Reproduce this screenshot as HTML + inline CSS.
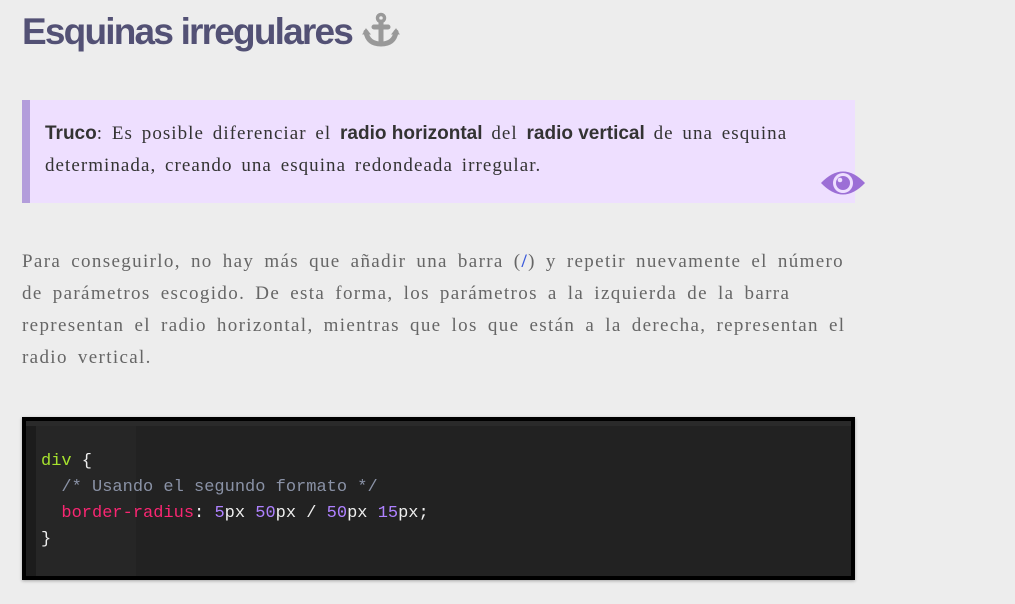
<!DOCTYPE html>
<html><head><meta charset="utf-8"><style>
body{margin:0;background:#ededed;width:1015px;height:604px;overflow:hidden;position:relative;font-family:"Liberation Serif",serif;}
h2{position:absolute;left:22px;top:8px;margin:0;font:bold 37px/48px "Liberation Sans",sans-serif;color:#535175;letter-spacing:-1.8px;}
.tip{position:absolute;left:22px;top:100px;width:825px;height:103px;background:#eedfff;border-left:8px solid #b39ddb;}
.tip p,.para{margin:0;font-size:19px;line-height:32px;letter-spacing:1.2px;word-spacing:3px;}
.tip p{position:absolute;left:15px;top:18px;color:#333;white-space:nowrap;letter-spacing:1.05px;}
b{font-family:"Liberation Sans",sans-serif;letter-spacing:0;word-spacing:0;color:#333;font-size:19px;}
.para{position:absolute;left:22px;top:246px;color:#666;white-space:nowrap;letter-spacing:1.35px;word-spacing:4px;}
.code{position:absolute;left:22px;top:417px;width:825px;height:155px;background:#222;border:4px solid #000;box-shadow:0 1px 3px rgba(0,0,0,.3);}
.code .top{position:absolute;left:0;top:0;right:0;height:5px;background:#2a2a2a;}
.code .l1{position:absolute;left:0;top:5px;bottom:0;width:10px;background:#1c1c1c;}
.code .l2{position:absolute;left:10px;top:5px;bottom:0;width:100px;background:#262626;}
pre{position:absolute;left:15px;top:28px;margin:0;font:17px/26px "Liberation Mono",monospace;color:#eee;}
.g{color:#a6e22e}.c{color:#8a92a6}.r{color:#f92672}.n{color:#ae81ff}
</style></head><body>
<h2>Esquinas irregulares</h2>
<svg style="position:absolute;left:362px;top:12px" width="38" height="36" viewBox="0 0 38 36" fill="none" stroke="#999" stroke-width="5"><circle cx="19" cy="6" r="3.5" stroke-width="3.5"/><path d="M19 10V32M12 15H26M4 20Q6 32 19 32Q32 32 34 20" stroke-linecap="round"/><path d="M1 22L4 17L8 22Z M30 22L34 17L37 22Z" fill="#999" stroke-width="1"/></svg>
<div class="tip"><p><b>Truco</b>: Es posible diferenciar el <b>radio horizontal</b> del <b>radio vertical</b> de una esquina<br>determinada, creando una esquina redondeada irregular.</p>
<svg style="position:absolute;left:789px;top:66px" width="48" height="34" viewBox="0 0 48 34"><path d="M2 17 Q24 -6 46 17 Q24 40 2 17Z" fill="#9c6fd6"/><circle cx="24" cy="17" r="10" fill="#eedfff"/><circle cx="24" cy="17" r="7" fill="#9c6fd6"/><circle cx="21" cy="14" r="2.3" fill="#eedfff"/></svg></div>
<p class="para">Para conseguirlo, no hay más que añadir una barra (<span style="color:#3b5bdb;font-weight:bold">/</span>) y repetir nuevamente el número<br>de parámetros escogido. De esta forma, los parámetros a la izquierda de la barra<br>representan el radio horizontal, mientras que los que están a la derecha, representan el<br>radio vertical.</p>
<div class="code"><div class="top"></div><div class="l1"></div><div class="l2"></div>
<pre><span class="g">div</span> {
  <span class="c">/* Usando el segundo formato */</span>
  <span class="r">border-radius</span>: <span class="n">5</span>px <span class="n">50</span>px / <span class="n">50</span>px <span class="n">15</span>px;
}</pre></div>
</body></html>
